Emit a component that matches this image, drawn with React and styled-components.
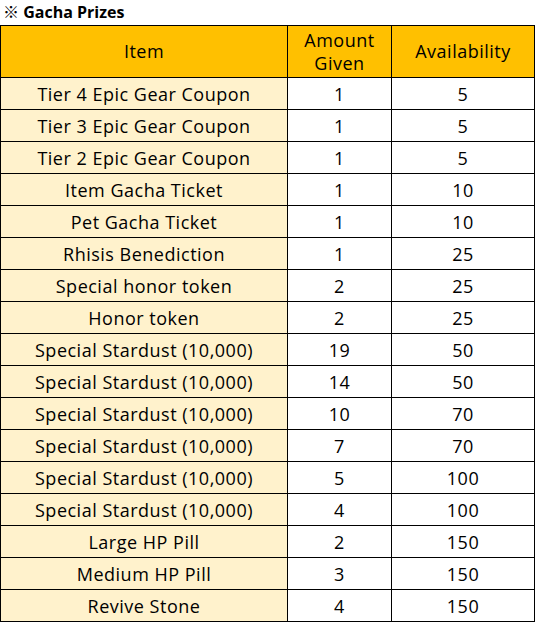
import styled, { createGlobalStyle } from "styled-components";

const GlobalStyle = createGlobalStyle`
  body {
    margin: 0;
    background: #fff;
    font-family: "Open Sans", "Noto Sans CJK KR", sans-serif;
    color: #000;
  }
`;

const Page = styled.div`
  width: 535px;
`;

const Title = styled.div`
  height: 25px;
  padding-left: 3px;
  font-size: 16px;
  font-weight: bold;
  line-height: 24px;
`;

const Table = styled.table`
  border-collapse: collapse;
  width: 534px;
  table-layout: fixed;
  font-size: 18px;
  letter-spacing: 0.5px;
`;

const Head = styled.th`
  background: #ffc000;
  border: 1px solid #000;
  font-weight: normal;
  height: 51px;
  padding: 0;
  line-height: 23px;
  text-align: center;
`;

const Cell = styled.td`
  background: ${(props) => (props.$shade ? "#fff2cc" : "#fff")};
  border: 1px solid #000;
  height: 31px;
  padding: 0;
  line-height: 22px;
  text-align: center;
  white-space: nowrap;
`;

const prizes = [
  ["Tier 4 Epic Gear Coupon", 1, 5],
  ["Tier 3 Epic Gear Coupon", 1, 5],
  ["Tier 2 Epic Gear Coupon", 1, 5],
  ["Item Gacha Ticket", 1, 10],
  ["Pet Gacha Ticket", 1, 10],
  ["Rhisis Benediction", 1, 25],
  ["Special honor token", 2, 25],
  ["Honor token", 2, 25],
  ["Special Stardust (10,000)", 19, 50],
  ["Special Stardust (10,000)", 14, 50],
  ["Special Stardust (10,000)", 10, 70],
  ["Special Stardust (10,000)", 7, 70],
  ["Special Stardust (10,000)", 5, 100],
  ["Special Stardust (10,000)", 4, 100],
  ["Large HP Pill", 2, 150],
  ["Medium HP Pill", 3, 150],
  ["Revive Stone", 4, 150],
];

const App = () => {
  return (
    <Page>
      <GlobalStyle />
      <Title>※ Gacha Prizes</Title>
      <Table>
        <colgroup>
          <col style={{ width: 287 }} />
          <col style={{ width: 104 }} />
          <col style={{ width: 143 }} />
        </colgroup>
        <thead>
          <tr>
            <Head>Item</Head>
            <Head>
              Amount
              <br />
              Given
            </Head>
            <Head>Availability</Head>
          </tr>
        </thead>
        <tbody>
          {prizes.map(([name, amount, avail], i) => (
            <tr key={i}>
              <Cell $shade>{name}</Cell>
              <Cell>{amount}</Cell>
              <Cell>{avail}</Cell>
            </tr>
          ))}
        </tbody>
      </Table>
    </Page>
  );
};

export default App;
